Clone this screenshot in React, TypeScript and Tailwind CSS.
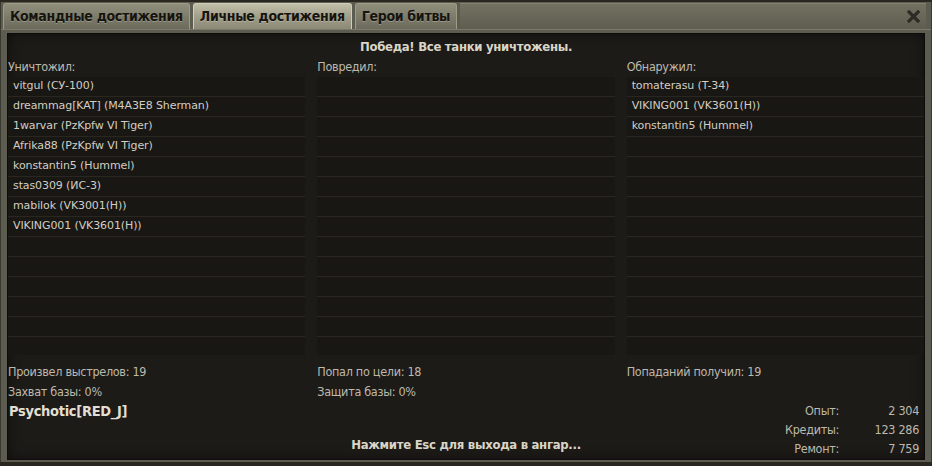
import React from "react";

const killed = [
  "vitgul (СУ-100)",
  "dreammag[KAT] (M4A3E8 Sherman)",
  "1warvar (PzKpfw VI Tiger)",
  "Afrika88 (PzKpfw VI Tiger)",
  "konstantin5 (Hummel)",
  "stas0309 (ИС-3)",
  "mabilok (VK3001(H))",
  "VIKING001 (VK3601(H))",
];

const spotted = ["tomaterasu (T-34)", "VIKING001 (VK3601(H))", "konstantin5 (Hummel)"];

const narrow = "font-['Liberation_Sans_Narrow','DejaVu_Sans_Condensed','Roboto_Condensed',Roboto,sans-serif]";

function List({ items }: { items: string[] }) {
  const rows = Array.from({ length: 14 }, (_, i) => items[i] ?? "");
  return (
    <div className="flex flex-col h-[278px] overflow-hidden bg-[#161411]">
      {rows.map((r, i) => (
        <div
          key={i}
          className="h-[20px] shrink-0 flex items-center pl-[5px] bg-[#191714] border-b border-[#29271f] font-['DejaVu_Sans',sans-serif] text-[11px] tracking-[-0.1px] text-[#d2cec3]"
        >
          {r}
        </div>
      ))}
    </div>
  );
}

function Tab({ label, active }: { label: string; active?: boolean }) {
  return (
    <div
      className={`h-full flex items-center px-[6px] rounded-t-[3px] border border-b-0 font-bold text-[14px] tracking-[-0.3px] text-[#15140f] [text-shadow:0_1px_0_rgba(255,255,255,0.25)] ${narrow} ${
        active
          ? "bg-gradient-to-b from-[#c2bfa9] via-[#a19e89] to-[#8c8a77] border-[#d0cdb8]"
          : "bg-gradient-to-b from-[#908e7b] to-[#6c6a5b] border-[#9d9b88]"
      }`}
    >
      {label}
    </div>
  );
}

export default function App() {
  return (
    <div className="w-[932px] h-[466px] bg-[#2a2620] overflow-hidden pt-[2px]">
      <div className="flex flex-col h-[460px] bg-[#5d5c50] border-x border-[#3a3930]">
        {/* Tabs */}
        <div className="flex items-end h-[29px] gap-[3px] pl-[2px] pt-[1px]">
          <Tab label="Командные достижения" />
          <Tab label="Личные достижения" active />
          <Tab label="Герои битвы" />
          <div className="flex-1 h-[26px] mr-[5px] flex items-center justify-end pr-[6px] bg-gradient-to-b from-[#727161] to-[#5e5d50] border-t border-[#85836f]">
            <svg width="13" height="13" viewBox="0 0 13 13">
              <path d="M2 2 L11 11 M11 2 L2 11" stroke="#2c2b25" strokeWidth="3.2" strokeLinecap="square" />
            </svg>
          </div>
        </div>

        {/* Body */}
        <div className="flex-1 px-[6px] pt-[3px] pb-[4px] border-t border-[#7b7a68]">
          <div className={`h-full flex flex-col bg-[#1d1b18] border border-[#0d0c0a] shadow-[inset_0_0_12px_rgba(0,0,0,0.5)] ${narrow} text-[12.5px] tracking-[-0.3px] text-[#bdb9ad]`}>
            <div className="h-[22px] mt-[2px] flex items-center justify-center font-bold text-[13px] text-[#d9d5c7]">
              Победа! Все танки уничтожены.
            </div>

            <div className="grid grid-cols-3 gap-x-[12px]">
              <div className="h-[19px] flex items-center">Уничтожил:</div>
              <div className="h-[19px] flex items-center">Повредил:</div>
              <div className="h-[19px] flex items-center">Обнаружил:</div>
              <List items={killed} />
              <List items={[]} />
              <List items={spotted} />
            </div>

            <div className="grid grid-cols-3 gap-x-[12px] mt-[7px]">
              <div className="h-[20px] flex items-center">Произвел выстрелов: 19</div>
              <div className="h-[20px] flex items-center">Попал по цели: 18</div>
              <div className="h-[20px] flex items-center">Попаданий получил: 19</div>
              <div className="h-[20px] flex items-center">Захват базы: 0%</div>
              <div className="h-[20px] flex items-center">Защита базы: 0%</div>
              <div />
            </div>

            <div className="flex-1 grid grid-cols-3 gap-x-[12px]">
              <div className="pl-[1px] font-bold text-[14.5px] leading-[18px] text-[#e2dfd2]">Psychotic[RED_J]</div>
              <div className="flex items-end justify-center pb-[5px] font-bold text-[13px] text-[#d9d5c7]">
                Нажмите Esc для выхода в ангар...
              </div>
              <div className="flex justify-end pr-[5px]">
                <div className="grid grid-cols-[auto_80px] auto-rows-[19px] items-center">
                  <div className="text-right">Опыт:</div>
                  <div className="text-right">2 304</div>
                  <div className="text-right">Кредиты:</div>
                  <div className="text-right">123 286</div>
                  <div className="text-right">Ремонт:</div>
                  <div className="text-right">7 759</div>
                </div>
              </div>
            </div>
          </div>
        </div>
      </div>
    </div>
  );
}
